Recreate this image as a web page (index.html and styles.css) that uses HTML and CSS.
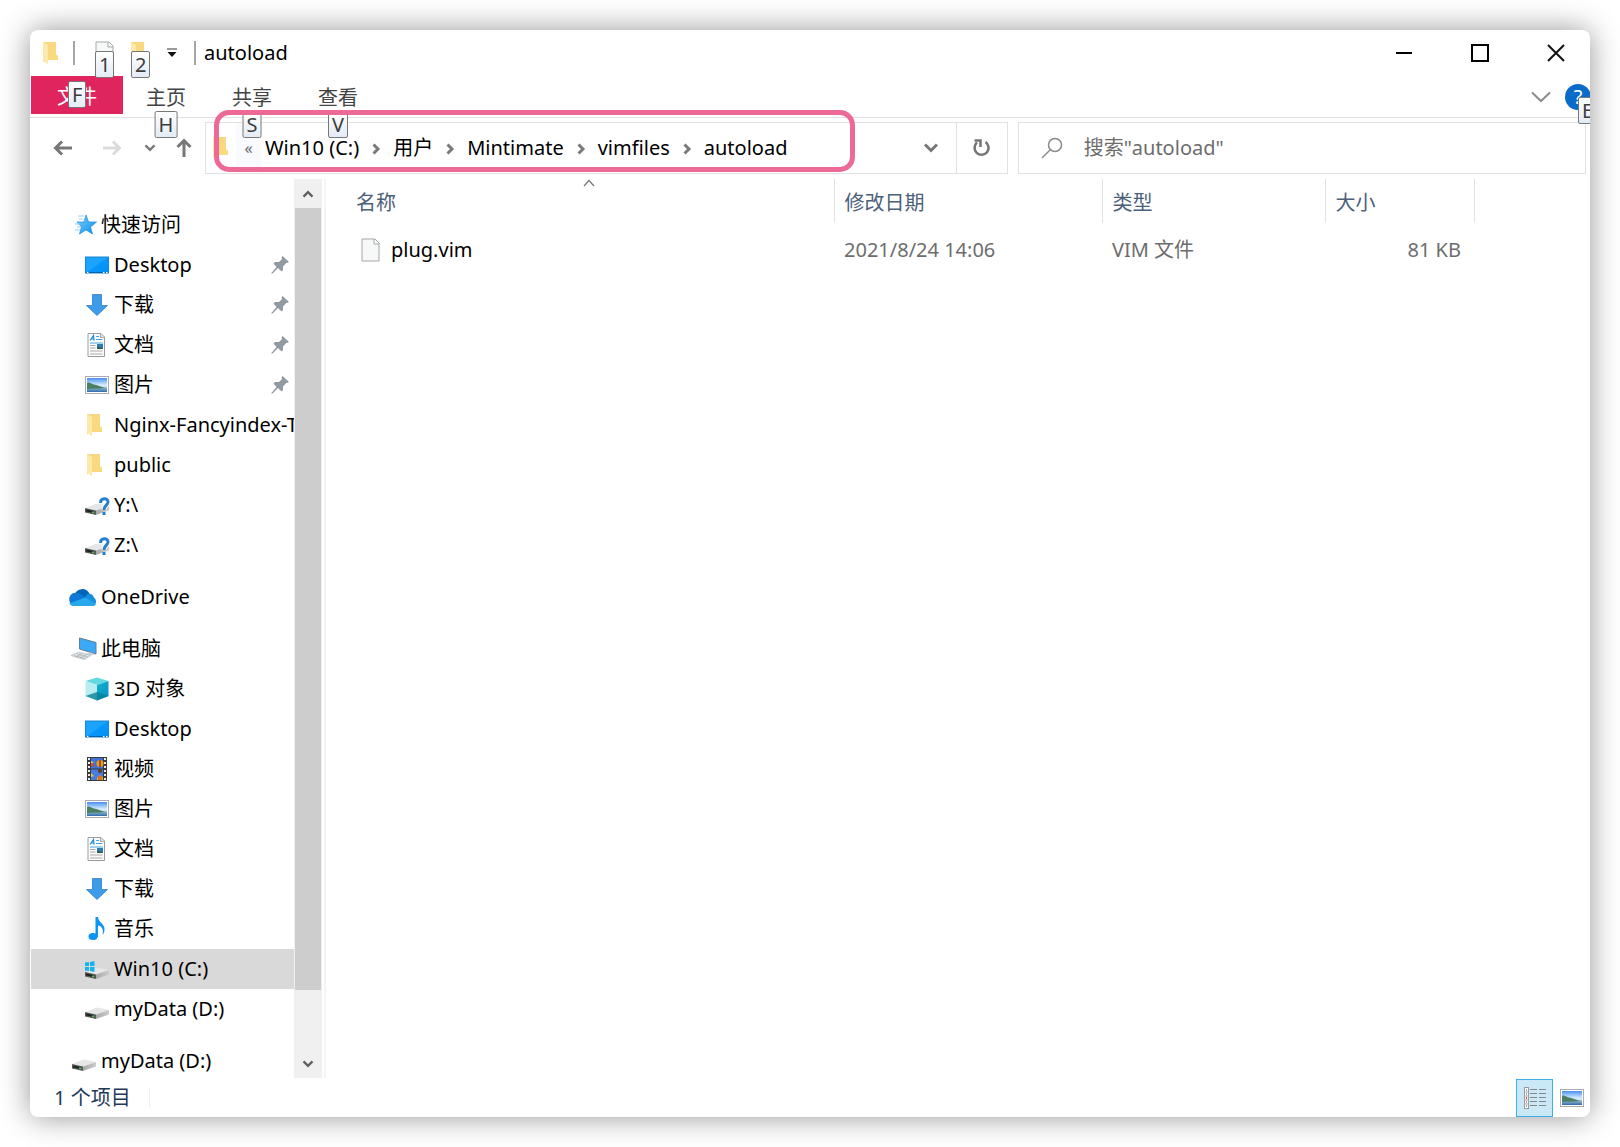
FILE: index.html
```html
<!DOCTYPE html>
<html lang="zh-CN">
<head>
  <meta charset="UTF-8" />
  <meta name="viewport" content="width=device-width, initial-scale=1.0"/>
  <title>autoload</title>
  <link rel="stylesheet" href="styles.css">
</head>
<body>

  <!-- icon sprites -->
  <svg class="sprites" width="0" height="0" aria-hidden="true">
    <defs>
      <linearGradient id="gFolder" x1="0" y1="0" x2="1" y2="1"><stop offset="0" stop-color="#f6d684"/><stop offset="1" stop-color="#fbdc7c"/></linearGradient>
      <linearGradient id="gDesk" x1="0" y1="0" x2="1" y2="1"><stop offset="0" stop-color="#1aa3ff"/><stop offset=".5" stop-color="#1aa3ff"/><stop offset=".5" stop-color="#0a96fa"/><stop offset="1" stop-color="#0090f5"/></linearGradient>
      <linearGradient id="gSky" x1="0" y1="0" x2="0" y2="1"><stop offset="0" stop-color="#4a90f0"/><stop offset=".5" stop-color="#d4ebff"/><stop offset="1" stop-color="#a9cdf0"/></linearGradient>
      <linearGradient id="gSea" x1="0" y1="0" x2="0" y2="1"><stop offset="0" stop-color="#a6c8dc"/><stop offset="1" stop-color="#2f6ca8"/></linearGradient>
      <linearGradient id="gStar" x1="0" y1="0" x2="1" y2="1"><stop offset="0" stop-color="#7cd0ff"/><stop offset="1" stop-color="#0a8ee8"/></linearGradient>
      <linearGradient id="gDisk" x1="0" y1="0" x2="1" y2="0"><stop offset="0" stop-color="#a8a8a8"/><stop offset="1" stop-color="#cccccc"/></linearGradient>
      <linearGradient id="gCube" x1="0" y1="0" x2="1" y2="1"><stop offset="0" stop-color="#12b2c6"/><stop offset="1" stop-color="#0a8fd0"/></linearGradient>
    </defs>

    <symbol id="folder" viewBox="0 0 26 26">
      <path d="M3 2H16V14L18 16V20H8L3 22Z" fill="url(#gFolder)"/>
      <path d="M3 2L8 5V24L3 21Z" fill="#fde9ac"/>
    </symbol>
    <symbol id="page" viewBox="0 0 26 26">
      <path d="M4 2H17L21 6V24H4Z" fill="#f7f8f8" stroke="#a6a6a6"/>
      <path d="M16 2V7H21" fill="#fff" stroke="#a6a6a6"/>
    </symbol>
    <symbol id="star" viewBox="0 0 26 26">
      <path d="M15 3L17.500 10H25.500L19.500 15L21.500 22L15 18L8.500 22L10.500 15L6 10H13Z" fill="url(#gStar)" stroke="#2a94dc" stroke-width=".8"/>
      <path d="M7 4H13M8 7H12M4 12H9M6 15H10M4 18H9" stroke="#8fd0fa" stroke-width="1"/>
    </symbol>
    <symbol id="desktop" viewBox="0 0 26 26">
      <rect x="1.500" y="5" width="23" height="16" fill="url(#gDesk)" stroke="#1b86cf"/>
      <path d="M2 20.500H24" stroke="#0a63ad"/>
      <path d="M3 20.500H4.500M19 20.500H20.500M22 20.500H23.500" stroke="#fff"/>
    </symbol>
    <symbol id="download" viewBox="0 0 26 26">
      <path d="M8.500 2.500H17.500V13.500H23.500L13 23.500L2.500 13.500H8.500Z" fill="#3d9be9" stroke="#2c82cc" stroke-width=".8"/>
    </symbol>
    <symbol id="document" viewBox="0 0 26 26">
      <path d="M4 1.500H17L20.500 5V24.500H4Z" fill="#fcfcfc" stroke="#9a9a9a"/>
      <path d="M16.500 2V5.500H20.500" fill="#ddd" stroke="#9a9a9a" stroke-width=".8"/>
      <path d="M6 8.500L9.500 3.500L10 8.500M7.500 7H10" fill="none" stroke="#1f8bd6" stroke-width="1.200"/>
      <path d="M12 4.500H15M12 7.500H18.500M6 11H19" stroke="#43a5e6" stroke-width="1.200"/>
      <rect x="13" y="12" width="6" height="5" fill="#3379b5"/>
      <path d="M13 17V14.500L19 16.500V17Z" fill="#2c5c44"/>
      <path d="M6 13.500H11.500M6 16H11.500M6 19H18.500M6 22H18.500" stroke="#a8a8a8"/>
    </symbol>
    <symbol id="picture" viewBox="0 0 26 26">
      <rect x="1.500" y="4.500" width="23" height="17" fill="#fff" stroke="#a9adb3"/>
      <rect x="3" y="6" width="20" height="14" fill="url(#gSky)"/>
      <rect x="3" y="15" width="20" height="5" fill="url(#gSea)"/>
      <path d="M3 11C5 9.500 7 12 10 12.500C13 13 17 15 21 16C15 17 8 16.500 3 17Z" fill="#4a7f62"/>
    </symbol>
    <symbol id="disk" viewBox="0 0 26 26">
      <path d="M1 16L13 11.500L25 14L12 18.500Z" fill="#e6e6e8"/>
      <path d="M12 18.500L25 14V18.500L12 23Z" fill="url(#gDisk)"/>
      <path d="M1 16L12 18.500V23L1 20.500Z" fill="#5a5a5a"/>
      <path d="M2 17.500L10 19V21L2 19.500Z" fill="#222"/>
      <rect x="8" y="19.500" width="2" height="1.500" fill="#35d04a"/>
    </symbol>
    <symbol id="netdisk" viewBox="0 0 26 26">
      <use href="#disk"/>
      <path d="M17 11C17 5.500 24 5.500 24 10C24 13 20 13.500 20 18" fill="none" stroke="#fff" stroke-width="5"/>
      <path d="M16.500 11C16.500 5.500 24 5.500 24 10C24 13 20 13.500 20 18" fill="none" stroke="#2680cf" stroke-width="3"/>
      <rect x="18.500" y="20" width="3" height="3" fill="#2680cf"/>
    </symbol>
    <symbol id="windisk" viewBox="0 0 26 26">
      <use href="#disk"/>
      <path d="M1 6.500L5 6V10H1ZM6 6L10.500 5V10H6ZM1 11H5V15L1 14.500ZM6 11H10.500V16L6 15Z" fill="#14b4f2"/>
    </symbol>
    <symbol id="onedrive" viewBox="0 0 28 26">
      <path d="M7 11A7.500 7.500 0 0 1 21 10L16 17L7 14Z" fill="#0364b8"/>
      <path d="M7 21.500A6.500 6.500 0 0 1 5 9.800C9 8.500 13 10 18 14L10 21.500Z" fill="#0f78d4"/>
      <path d="M17 13C19 9 24 9 25 13.500C28 15 28 21 23.500 21.500H14Z" fill="#1490df"/>
      <path d="M2 19L17 13.500L27 19.500C26 21 25 21.500 23.500 21.500H7C5 21.500 3 20.500 2 19Z" fill="#28a8ea"/>
    </symbol>
    <symbol id="pc" viewBox="0 0 26 26">
      <path d="M8.500 2L25 6.500V18L8.500 13Z" fill="#3aa9f8" stroke="#5f7d92"/>
      <path d="M13 18L20 16.500L24 18.500L17 20Z" fill="#c9d1d6"/>
      <path d="M0 19.500L8 16L20 19.500L13 23.500Z" fill="#dfe3e5" stroke="#a9b1b6" stroke-width=".6"/>
      <path d="M3 19.500L14 22.500M6 18L17 21M5 21L11 17.500M9 22L15 19" stroke="#a0a8ad" stroke-width=".6"/>
    </symbol>
    <symbol id="cube" viewBox="0 0 26 26">
      <path d="M13 1.500L24.500 5L13 9L1.500 5Z" fill="#62d9e0"/>
      <path d="M1.500 5L13 9V24.500L1.500 20Z" fill="#b7eef0"/>
      <path d="M13 9L24.500 5V20L13 24.500Z" fill="url(#gCube)"/>
      <path d="M1.500 20L13 16L24.500 20L13 24.500Z" fill="#067f96" opacity=".8"/>
    </symbol>
    <symbol id="video" viewBox="0 0 26 26">
      <rect x="3" y="1" width="20" height="24" fill="#3a3a3a"/>
      <rect x="7" y="2" width="12" height="10.500" fill="#3f71d6"/>
      <rect x="7" y="13.500" width="12" height="10.500" fill="#4a7be0"/>
      <path d="M5 2V25M21 2V25" stroke="#eee" stroke-width="2" stroke-dasharray="2 2"/>
      <circle cx="16" cy="7.500" r="3.500" fill="#e0a416"/>
      <path d="M16 4V11" stroke="#b5271d" stroke-width="1.500"/>
      <path d="M7 7L11 9L7 11Z" fill="#e4402c"/>
      <path d="M7 5L10 6.500L7 7.500Z" fill="#f5d63a"/>
      <circle cx="16" cy="15" r="2" fill="#5d3b1c"/>
      <path d="M13 24C12 18 20 18 19 24Z" fill="#e9ad1c"/>
      <path d="M15 20V24M17 20V24" stroke="#c53a1f"/>
      <path d="M7 17L10 20L7 21Z" fill="#e8cc3d"/>
    </symbol>
    <symbol id="music" viewBox="0 0 26 26">
      <ellipse cx="9" cy="20.500" rx="4.500" ry="3.500" fill="#0a95f5"/>
      <path d="M11.500 1H14C14 6 21 8 20.500 13.500C20.500 16 19.500 18 18.500 19C20 13 17.500 10 14 9.500V21H11.500Z" fill="#0a95f5"/>
    </symbol>
    <symbol id="pin" viewBox="0 0 18 18">
      <path d="M11.500 0L18 6L16 7L15.500 6.800L12 10.500V14L10.500 15.500L7 12L1.500 17.500L0 17.500L5.500 11L2.500 7.500L4 6H8L11 3L10.500 1.500Z" fill="#8f9aa3"/>
    </symbol>
    <symbol id="chev" viewBox="0 0 10 12">
      <path d="M2.500 1.500L7 6L2.500 10.500" fill="none" stroke="#7a7a7a" stroke-width="3"/>
    </symbol>
    <symbol id="chevDown" viewBox="0 0 16 10">
      <path d="M2 1.500L8 7.500L14 1.500" fill="none" stroke="currentColor" stroke-width="3"/>
    </symbol>
    <symbol id="arrow" viewBox="0 0 20 16">
      <path d="M19 8H3M9 1.500L2.500 8L9 14.500" fill="none" stroke="currentColor" stroke-width="3"/>
    </symbol>
  </svg>

  <div class="window">

    <header class="titlebar">
      <svg class="app-icon"><use href="#folder"/></svg>
      <span class="divider"></span>
      <button class="quick-btn" aria-label="属性"><svg class="icon"><use href="#page"/></svg><kbd class="keytip tip-quick">1</kbd></button>
      <button class="quick-btn" aria-label="新建文件夹"><svg class="icon"><use href="#folder"/></svg><kbd class="keytip tip-quick">2</kbd></button>
      <button class="quick-more" aria-label="自定义快速访问工具栏">
        <svg width="12" height="10" viewBox="0 0 12 10"><path d="M1 1H11" stroke="#333"/><path d="M1.500 4H10.500L6 9Z" fill="#111"/></svg>
      </button>
      <span class="divider"></span>
      <h1 class="title">autoload</h1>
      <div class="window-controls">
        <button aria-label="最小化"><svg width="18" height="18"><path d="M1 9H17" stroke="#000" stroke-width="2"/></svg></button>
        <button aria-label="最大化"><svg width="18" height="18"><rect x="1" y="1" width="16" height="16" fill="none" stroke="#000" stroke-width="2"/></svg></button>
        <button aria-label="关闭"><svg width="18" height="18"><path d="M1 1L17 17M17 1L1 17" stroke="#111" stroke-width="2"/></svg></button>
      </div>
    </header>

    <nav class="ribbon">
      <button class="tab file-tab">文件<kbd class="keytip tip-file">F</kbd></button>
      <button class="tab">主页<kbd class="keytip tip-tab">H</kbd></button>
      <button class="tab">共享<kbd class="keytip tip-tab">S</kbd></button>
      <button class="tab">查看<kbd class="keytip tip-tab">V</kbd></button>
      <div class="ribbon-right">
        <button class="expand" aria-label="展开功能区"><svg width="20" height="12"><path d="M1 1.500L10 10L19 1.500" fill="none" stroke="#8c8c8c" stroke-width="2"/></svg></button>
        <button class="help" aria-label="帮助"><span class="help-mark">?</span><kbd class="keytip tip-help">E</kbd></button>
      </div>
    </nav>

    <div class="toolbar">
      <div class="history">
        <button class="back" aria-label="后退"><svg width="20" height="16"><use href="#arrow"/></svg></button>
        <button class="forward" aria-label="前进"><svg width="20" height="16"><use href="#arrow"/></svg></button>
        <button class="recent" aria-label="最近的位置"><svg width="12" height="8"><use href="#chevDown"/></svg></button>
        <button class="up" aria-label="上移"><svg width="16" height="20" viewBox="0 0 16 20"><path d="M8 19V3M1.500 9L8 2.500L14.500 9" fill="none" stroke="currentColor" stroke-width="3"/></svg></button>
      </div>

      <div class="address">
        <svg class="address-icon"><use href="#folder"/></svg>
        <button class="crumb-more" aria-label="更多位置">«</button>
        <a class="crumb" href="#">Win10 (C:)</a>
        <svg class="crumb-sep"><use href="#chev"/></svg>
        <a class="crumb" href="#">用户</a>
        <svg class="crumb-sep"><use href="#chev"/></svg>
        <a class="crumb" href="#">Mintimate</a>
        <svg class="crumb-sep"><use href="#chev"/></svg>
        <a class="crumb" href="#">vimfiles</a>
        <svg class="crumb-sep"><use href="#chev"/></svg>
        <a class="crumb" href="#">autoload</a>
        <button class="address-drop" aria-label="以前的位置"><svg width="16" height="10"><use href="#chevDown"/></svg></button>
        <button class="refresh" aria-label="刷新">
          <svg width="18" height="20" viewBox="0 0 18 20"><path d="M12.500 4A7 7 0 1 1 4 4.500" fill="none" stroke="#777" stroke-width="2.600"/><path d="M1.500 2.500H7.500V9" fill="none" stroke="#777" stroke-width="2.600"/></svg>
        </button>
        <div class="highlight"></div>
      </div>

      <div class="search">
        <svg width="22" height="22"><circle cx="14" cy="8" r="6.500" fill="none" stroke="#8a8a8a" stroke-width="1.500"/><path d="M9.500 12.500L1 21" stroke="#8a8a8a" stroke-width="1.500"/></svg>
        <input type="text" aria-label="搜索" placeholder='搜索"autoload"'>
      </div>
    </div>

    <main class="content">
      <nav class="tree">
        <ul class="group">
          <li><a class="node root" href="#"><svg class="icon"><use href="#star"/></svg>快速访问</a></li>
          <li><a class="node" href="#"><svg class="icon"><use href="#desktop"/></svg>Desktop<svg class="pin"><use href="#pin"/></svg></a></li>
          <li><a class="node" href="#"><svg class="icon"><use href="#download"/></svg>下载<svg class="pin"><use href="#pin"/></svg></a></li>
          <li><a class="node" href="#"><svg class="icon"><use href="#document"/></svg>文档<svg class="pin"><use href="#pin"/></svg></a></li>
          <li><a class="node" href="#"><svg class="icon"><use href="#picture"/></svg>图片<svg class="pin"><use href="#pin"/></svg></a></li>
          <li><a class="node" href="#"><svg class="icon"><use href="#folder"/></svg>Nginx-Fancyindex-Theme</a></li>
          <li><a class="node" href="#"><svg class="icon"><use href="#folder"/></svg>public</a></li>
          <li><a class="node" href="#"><svg class="icon"><use href="#netdisk"/></svg>Y:\</a></li>
          <li><a class="node" href="#"><svg class="icon"><use href="#netdisk"/></svg>Z:\</a></li>
        </ul>
        <ul class="group">
          <li><a class="node root" href="#"><svg class="icon cloud"><use href="#onedrive"/></svg>OneDrive</a></li>
        </ul>
        <ul class="group">
          <li><a class="node root" href="#"><svg class="icon"><use href="#pc"/></svg>此电脑</a></li>
          <li><a class="node" href="#"><svg class="icon"><use href="#cube"/></svg>3D 对象</a></li>
          <li><a class="node" href="#"><svg class="icon"><use href="#desktop"/></svg>Desktop</a></li>
          <li><a class="node" href="#"><svg class="icon"><use href="#video"/></svg>视频</a></li>
          <li><a class="node" href="#"><svg class="icon"><use href="#picture"/></svg>图片</a></li>
          <li><a class="node" href="#"><svg class="icon"><use href="#document"/></svg>文档</a></li>
          <li><a class="node" href="#"><svg class="icon"><use href="#download"/></svg>下载</a></li>
          <li><a class="node" href="#"><svg class="icon"><use href="#music"/></svg>音乐</a></li>
          <li><a class="node selected" href="#"><svg class="icon"><use href="#windisk"/></svg>Win10 (C:)</a></li>
          <li><a class="node" href="#"><svg class="icon"><use href="#disk"/></svg>myData (D:)</a></li>
        </ul>
        <ul class="group">
          <li><a class="node root" href="#"><svg class="icon"><use href="#disk"/></svg>myData (D:)</a></li>
        </ul>
      </nav>

      <div class="scrollbar">
        <button class="scroll-up" aria-label="向上滚动"><svg width="12" height="8"><use href="#chevDown"/></svg></button>
        <div class="track"><div class="thumb"></div></div>
        <button aria-label="向下滚动"><svg width="12" height="8"><use href="#chevDown"/></svg></button>
      </div>

      <div class="files">
        <table>
          <colgroup><col class="col-name"><col class="col-date"><col class="col-type"><col class="col-size"><col></colgroup>
          <thead>
            <tr>
              <th>名称<svg class="sort" width="18" height="8"><path d="M4 7L9 1.500L14 7" fill="none" stroke="#777" stroke-width="1.200"/></svg></th>
              <th>修改日期</th>
              <th>类型</th>
              <th>大小</th>
              <td></td>
            </tr>
          </thead>
          <tbody>
            <tr>
              <td><a class="file" href="#"><svg class="icon"><use href="#page"/></svg>plug.vim</a></td>
              <td>2021/8/24 14:06</td>
              <td>VIM 文件</td>
              <td class="size">81 KB</td>
              <td></td>
            </tr>
          </tbody>
        </table>
      </div>
    </main>

    <footer class="statusbar">
      <span class="count">1 个项目</span>
      <div class="views">
        <button class="view active" aria-label="详细信息">
          <svg width="24" height="24">
            <rect x="1.500" y="1.500" width="4" height="21" fill="#fff" stroke="#999"/>
            <path d="M1 6H6M1 10H6M1 14H6M1 18H6" stroke="#aaa"/>
            <path d="M3 4H4M3 8H4M3 16H4M3 20H4" stroke="#446"/><path d="M3 12H4" stroke="#d33" stroke-width="2"/>
            <path d="M7 3.500H14M16 3.500H23M7 7.500H14M16 7.500H23M7 11.500H14M16 11.500H23M7 15.500H14M16 15.500H23M7 19.500H14M16 19.500H23" stroke="#85898c"/>
          </svg>
        </button>
        <button class="view" aria-label="大缩略图"><svg class="icon"><use href="#picture"/></svg></button>
      </div>
    </footer>
  </div>

</body>
</html>
```
FILE: styles.css
```css
:root {
  --line: #e2e2e2;
  --muted: #6d6d6d;
  --accent: #e0245e;
}

* {
  box-sizing: border-box;
}

body {
  margin: 0;
  padding: 30px;
  background: #fff;
  color: #000;
  font-family: "Noto Sans", "Noto Sans CJK SC", sans-serif;
  font-size: 20px;
  line-height: 28px;
}

button {
  display: flex;
  align-items: center;
  justify-content: center;
  padding: 0;
  border: 0;
  background: none;
  color: inherit;
  font: inherit;
}

a {
  color: inherit;
  text-decoration: none;
}

ul {
  list-style: none;
  margin: 0;
  padding: 0;
}

.sprites {
  position: absolute;
}

.icon {
  flex: none;
  width: 26px;
  height: 26px;
}

.window {
  display: flex;
  flex-direction: column;
  height: calc(100vh - 60px);
  min-height: 600px;
  overflow: hidden;
  background: #fff;
  border-radius: 8px;
  box-shadow: 0 0 30px rgba(0, 0, 0, 0.42);
}

/* title bar */
.titlebar {
  display: flex;
  align-items: center;
  height: 46px;
  padding-left: 10px;
}

.app-icon {
  width: 26px;
  height: 26px;
  margin-right: 7px;
}

.divider {
  width: 2px;
  height: 24px;
  background: #a5a5a5;
}

.quick-btn {
  position: relative;
  width: 36px;
}

.divider + .quick-btn {
  margin-left: 12px;
}

.quick-more {
  width: 36px;
  margin: 0 4px 0 -5px;
}

.title {
  margin: 0 0 0 8px;
  font-size: 20px;
  font-weight: normal;
}

.window-controls {
  display: flex;
  gap: 8px;
  margin-left: auto;
}

.window-controls button {
  width: 68px;
  height: 44px;
}

/* keyboard hints */
.keytip {
  position: absolute;
  z-index: 1;
  height: 27px;
  padding: 0 3px;
  border: 1px solid #777;
  border-radius: 2px;
  background: linear-gradient(#fff, #e3ebf6);
  color: #3c3c3c;
  font: 20px/25px "Noto Sans", sans-serif;
}

.tip-quick {
  top: 11px;
  left: 8px;
}

.tip-file {
  top: 5px;
  left: 37px;
}

.tip-tab {
  top: 35px;
  left: 50%;
  transform: translateX(-50%);
}

/* ribbon */
.ribbon {
  display: flex;
  height: 42px;
  border-bottom: 1px solid var(--line);
}

.tab {
  position: relative;
  width: 86px;
  height: 40px;
  padding-top: 3px;
  color: #444;
}

.file-tab {
  width: 92px;
  height: 38px;
  margin: 0 0 0 1px;
  background: var(--accent);
  color: #fff;
}

.ribbon-right {
  display: flex;
  align-items: center;
  margin-left: auto;
}

.expand {
  width: 48px;
}

.help {
  position: relative;
  width: 26px;
  height: 26px;
  margin-right: -1px;
  border-radius: 50%;
  background: #0a6cc8;
  color: #fff;
}

.tip-help {
  top: 13px;
  left: 13px;
}

/* navigation and address */
.toolbar {
  display: flex;
  height: 52px;
  margin: 4px 4px 5px 8px;
}

.history {
  display: flex;
  margin-right: 1px;
  color: #777;
}

.back,
.forward {
  width: 49px;
}

.forward {
  color: #dcdcdc;
}

.forward svg {
  transform: scaleX(-1);
}

.recent {
  width: 28px;
}

.up {
  width: 40px;
}

.address {
  position: relative;
  display: flex;
  flex: 803;
  align-items: center;
  border: 1px solid var(--line);
  margin-right: 10px;
}

.address-icon {
  width: 26px;
  height: 26px;
  margin-left: 4px;
}

.crumb-more {
  width: 25px;
  height: 50px;
  background: #f8fafd;
  color: #666;
  font-size: 16px;
}

.crumb {
  margin-left: 4px;
  white-space: nowrap;
}

.crumb-sep {
  flex: none;
  width: 10px;
  height: 12px;
  margin: 2px 8px 0 12px;
}

.address-drop {
  width: 50px;
  height: 50px;
  margin-left: auto;
  color: #777;
}

.refresh {
  width: 51px;
  height: 50px;
  border-left: 1px solid var(--line);
}

.highlight {
  position: absolute;
  z-index: 2;
  top: -13px;
  left: 8px;
  width: 80%;
  height: 62px;
  border: 5px solid #ec6a95;
  border-radius: 15px;
  pointer-events: none;
}

.search {
  display: flex;
  flex: 568;
  align-items: center;
  border: 1px solid var(--line);
}

.search svg {
  flex: none;
  margin-left: 22px;
}

.search input {
  flex: 1;
  min-width: 0;
  margin-left: 21px;
  padding: 0;
  border: 0;
  outline: none;
  background: none;
  font: inherit;
}

.search input::placeholder {
  color: var(--muted);
  opacity: 1;
}

/* folder tree */
.content {
  display: flex;
  flex: 1;
  min-height: 0;
}

.tree {
  width: 264px;
  padding-top: 26px;
  overflow: hidden;
}

.group {
  margin-bottom: 12px;
}

.node {
  display: flex;
  align-items: center;
  gap: 4px;
  height: 40px;
  margin-left: 1px;
  padding-left: 53px;
  white-space: nowrap;
}

.root {
  padding-left: 40px;
}

.cloud {
  width: 30px;
  height: 28px;
  margin-left: -4px;
}

.selected {
  background: #d9d9d9;
}

.pin {
  width: 18px;
  height: 18px;
  margin: 0 5px 0 auto;
}

.scrollbar {
  display: flex;
  flex-direction: column;
  flex: none;
  width: 28px;
  background: #f0f0f0;
  color: #606060;
}

.scrollbar button {
  height: 29px;
}

.scroll-up svg {
  transform: rotate(180deg);
}

.track {
  flex: 1;
  padding: 0 1px;
}

.thumb {
  height: 93%;
  background: #cdcdcd;
}

/* file list */
.files {
  flex: 1;
  margin-left: 2px;
  border-left: 2px solid #f5f5f5;
}

table {
  width: 100%;
  table-layout: fixed;
  border-collapse: collapse;
  color: var(--muted);
}

.col-name {
  width: 508px;
}

.col-date {
  width: 268px;
}

.col-type {
  width: 223px;
}

.col-size {
  width: 149px;
}

th {
  position: relative;
  height: 44px;
  padding: 3px 10px 0;
  border-right: 1px solid var(--line);
  color: #4c607a;
  font-weight: normal;
  text-align: left;
}

td {
  height: 52px;
  padding: 2px 10px 0;
}

thead td {
  height: 44px;
}

th:first-child {
  padding-left: 30px;
}

td:first-child {
  padding-left: 32px;
}

.sort {
  position: absolute;
  top: 0;
  left: 50%;
}

.file {
  display: flex;
  align-items: center;
  gap: 7px;
  color: #000;
}

.size {
  padding-right: 13px;
  text-align: right;
}

/* status bar */
.statusbar {
  display: flex;
  align-items: center;
  height: 39px;
  padding-left: 24px;
  color: #1e395b;
}

.count {
  padding-right: 18px;
  border-right: 1px solid #eee;
  line-height: 20px;
}

.views {
  display: flex;
  margin-left: auto;
}

.view {
  width: 37px;
  height: 38px;
}

.active {
  border: 1px solid #3fb0e4;
  background: #cbe8f6;
}
```
